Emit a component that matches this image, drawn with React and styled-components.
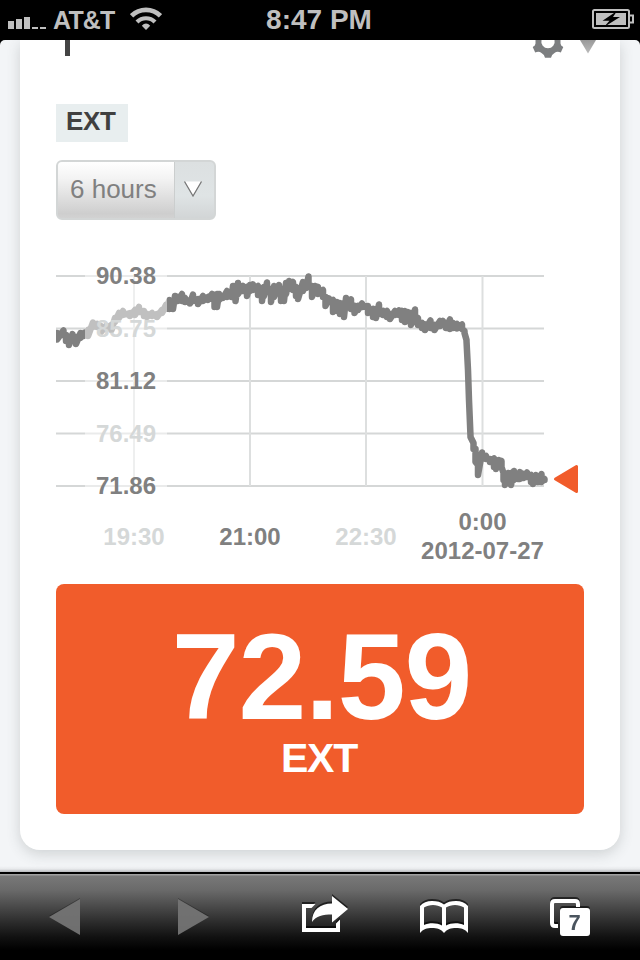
import React from "react";
import styled, { createGlobalStyle, css } from "styled-components";

const GlobalStyle = createGlobalStyle`
  * {
    box-sizing: border-box;
  }
  body {
    margin: 0;
    background: #000;
    font-family: "Liberation Sans", Arial, sans-serif;
  }
  svg {
    display: block;
  }
`;

const boldWhite = css`
  color: #fff;
  font-weight: bold;
`;

const Screen = styled.div`
  display: flex;
  flex-direction: column;
  width: 640px;
  height: 960px;
  overflow: hidden;
  background: #000;
`;

/* ------------------------------- status bar ------------------------------- */

const StatusBar = styled.header`
  display: grid;
  grid-template-columns: 1fr auto 1fr;
  align-items: center;
  flex: none;
  height: 40px;
  padding: 0 6px 0 8px;
  color: #bfbfbf;
  font-weight: bold;
`;

const Carrier = styled.div`
  display: flex;
  align-items: center;
  font-size: 25px;
  letter-spacing: -0.8px;
  line-height: 40px;
  svg:first-child {
    margin: 6px 7px 0 0;
  }
  svg:last-child {
    margin: 0 0 2px 15px;
  }
`;

const Clock = styled.time`
  margin-right: 4px;
  font-size: 28px;
  line-height: 38px;
`;

const BatterySlot = styled.div`
  display: flex;
  justify-content: flex-end;
  margin-bottom: 2px;
`;

/* ---------------------------------- page ---------------------------------- */

const Page = styled.main`
  display: flex;
  flex: 1;
  flex-direction: column;
  padding: 0 20px 22px;
  overflow: hidden;
  border-radius: 5px 5px 0 0;
  background: linear-gradient(
      to top,
      rgba(90, 90, 95, 0.4),
      rgba(150, 150, 155, 0.12) 3px,
      transparent 6px
    ),
    #f3f5f7;
`;

const Card = styled.section`
  display: flex;
  flex: 1;
  flex-direction: column;
  align-items: flex-start;
  padding: 0 36px 36px;
  border-radius: 0 0 20px 20px;
  background: #fff;
  box-shadow: 0 4px 14px rgba(60, 70, 70, 0.2);
`;

const CardHeader = styled.div`
  display: flex;
  justify-content: space-between;
  flex: none;
  width: 528px;
  height: 64px;
`;

const TitleStem = styled.span`
  width: 5px;
  height: 16px;
  margin-left: 9px;
  background: #444;
`;

const Tag = styled.h2`
  flex: none;
  height: 38px;
  margin: 0 0 18px;
  padding: 0 10px;
  width: 72px;
  background: #e8eeef;
  color: #404040;
  font-size: 26px;
  letter-spacing: -0.4px;
  line-height: 35px;
`;

const Select = styled.button`
  display: flex;
  flex: none;
  width: 160px;
  height: 60px;
  padding: 0;
  overflow: hidden;
  border: 2px solid #d3d6d6;
  border-radius: 6px;
  background: linear-gradient(#dce0e1, #dfe4e5 60%, #d2d5d6);
  font-family: inherit;
`;

const SelectValue = styled.span`
  width: 117px;
  height: 56px;
  padding-left: 12px;
  border-right: 1px solid #cbcece;
  background: linear-gradient(#fff, #f3f3f3 30%, #cecece 92%, #d2d2d2);
  color: #808080;
  font-size: 26px;
  line-height: 54px;
  text-align: left;
`;

const SelectArrow = styled.span`
  display: flex;
  flex: 1;
  padding: 18px 0 0 8px;
`;

const Reading = styled.div`
  display: flex;
  flex: none;
  flex-direction: column;
  align-items: center;
  width: 528px;
  height: 230px;
  padding-top: 33px;
  border-radius: 8px;
  background: #f15c2b;
`;

const ReadingValue = styled.strong`
  ${boldWhite}
  padding-left: 3px;
  font-size: 122px;
  letter-spacing: -1.2px;
  line-height: 120px;
`;

const ReadingLabel = styled.span`
  ${boldWhite}
  padding-right: 2px;
  font-size: 41px;
  letter-spacing: -1.2px;
  line-height: 42px;
`;

/* --------------------------------- toolbar -------------------------------- */

const Toolbar = styled.nav`
  display: grid;
  grid-template-columns: 130px 126px 126px 124px 134px;
  flex: none;
  height: 88px;
  border-top: 2px solid #000;
  background: linear-gradient(
    #a0a0a0 0,
    #a0a0a0 1px,
    #787878 2px,
    #6a6a6a 16px,
    #4b4b4b 32px,
    #2c2c2c 48px,
    #111 63px,
    #000 76px
  );
`;

const ToolButton = styled.button`
  padding: 0;
  border: 0;
  background: none;
  opacity: ${({ $dimmed }) => ($dimmed ? 0.95 : 1)};
  svg {
    width: 100%;
    height: 86px;
    filter: ${({ $dimmed }) =>
      $dimmed
        ? "drop-shadow(0 -1px 0 rgba(0, 0, 0, 0.3))"
        : "drop-shadow(0 -2px 0 rgba(0, 0, 0, 0.6))"};
  }
`;

/* ---------------------------------- icons --------------------------------- */

const SignalIcon = () => (
  <svg width="38" height="12" viewBox="8 17 38 12" fill="#bfbfbf">
    <path d="M8 21h6v8H8zM16 19h6v10h-6zM24 17h6v12h-6zM32 27h6v2h-6zM40 27h6v2h-6z" />
  </svg>
);

const WifiIcon = () => (
  <svg width="32" height="24" viewBox="130 8 32 24" fill="none" stroke="#bfbfbf">
    <path d="M131.5 16.8a20.5 20.5 0 0 1 29 0" strokeWidth="4.8" />
    <path d="M137 23a12.7 12.7 0 0 1 18 0" strokeWidth="4.2" />
    <path d="M146 31l-4.2-4.2q4.2-4.6 8.4 0z" fill="#bfbfbf" stroke="none" />
  </svg>
);

const BatteryIcon = () => (
  <svg width="42" height="20" viewBox="592 9 42 20">
    <rect x="593" y="10" width="36" height="18" rx="1.5" fill="none" stroke="#bfbfbf" strokeWidth="2" />
    <path d="M630 15.5h3v7h-3" fill="none" stroke="#bfbfbf" strokeWidth="2" />
    <path d="M596 13h30v12h-30z" fill="#bfbfbf" />
    <path d="M617 11L602.5 20.8H609.5L604 27L620 17H613z" fill="#000" />
  </svg>
);

const HeaderIcons = () => (
  <svg width="56" height="20" viewBox="528 40 56 20" overflow="visible">
    <defs>
      <linearGradient id="caret" x2="0" y2="1">
        <stop offset="0" stopColor="#999" />
        <stop offset="1" stopColor="#bbb" />
      </linearGradient>
    </defs>
    <path
      d="M535.5 40V43.500Q535.500 45.500 532.700 47L535.2 52.500Q539 51 541.500 53Q544.500 54.500 545 57.800H551Q551.500 54.500 554.500 53Q557 51 560.800 52.500L563.300 47Q560.500 45.500 560.500 43.500V40H554.500A6.700 6.700 0 1 1 541.500 40z"
      fill="#7c7e80"
    />
    <path d="M580 40h16l-8 13.500z" fill="url(#caret)" />
  </svg>
);

const BackIcon = () => (
  <svg viewBox="0 874 130 86">
    <path d="M49 917l31-18v36z" fill="#747474" />
  </svg>
);

const ForwardIcon = () => (
  <svg viewBox="130 874 126 86">
    <path d="M178 899l31 18-31 18z" fill="#747474" />
  </svg>
);

const ShareIcon = () => (
  <svg viewBox="256 874 126 86" fill="#fff">
    <path d="M302 904h13.500l-4 4H306v20h30v-4.500l4-4V932h-38z" />
    <path d="M312 922c0-12 8-18.500 20-18.500V896l16 13-16 13.500v-8c-9 0-16 1.500-20 7.500z" />
  </svg>
);

const BookmarksIcon = () => (
  <svg viewBox="382 874 124 86">
    <path
      fill="#fff"
      fillRule="evenodd"
      d="M420 933v-27c3-3.500 7-5 12-5s9 1 12 3.500c3-2.500 7-3.500 12-3.500s9 1.500 12 5v27c-3-4-7-5-12-5s-9 1-12 5c-3-4-7-5-12-5s-9 1-12 5zM424 907.500v17.500c5-2.500 13-2.500 18 .5v-18c-5-3.500-13-3.500-18 0zM446 907.500v18c5-3 13-3 18-.5v-17.500c-5-3.500-13-3.500-18 0z"
    />
  </svg>
);

const TabsIcon = ({ count }) => (
  <svg viewBox="506 874 134 86">
    <path
      d="M578 907v-3q0-3-3-3h-20q-3 0-3 3v19q0 3 3 3h3"
      fill="none"
      stroke="#fff"
      strokeWidth="4"
    />
    <rect x="560" y="908" width="30" height="28" rx="3" fill="#fff" />
    <text x="574.5" y="930" fill="#4a545e" fontSize="22" fontWeight="bold" textAnchor="middle">
      {count}
    </text>
  </svg>
);

/* ---------------------------------- chart --------------------------------- */

// [x, high, low]
const samples = [
  [57, 333, 339.5], [63.5, 330.5, 335], [66, 335, 341], [69, 337, 345],
  [72.5, 334, 338], [76, 337, 344], [80.5, 333, 338], [84, 333, 336],
  [88, 330, 336], [93, 322.5, 327], [97, 324, 327], [101, 326, 332],
  [106, 326, 329], [111.5, 325, 330], [115, 318, 322], [119, 313, 318],
  [123, 311, 315], [130, 313, 316], [135, 310, 315], [139, 307, 312],
  [144, 311, 316], [147, 314, 317], [152, 313, 316], [157, 314, 317],
  [162, 310, 313], [166, 305, 309], [169.5, 300, 309], [173, 300.5, 309],
  [175, 296, 302], [178, 297, 301], [182, 294, 301], [185, 298, 302],
  [190, 300, 303.5], [193, 294.5, 301], [198, 299, 304], [203, 296, 301],
  [208, 297, 300], [212, 294, 299], [214.5, 295, 307], [217, 294, 307],
  [219, 294, 300], [223, 296, 298], [227, 291, 297], [231.5, 292, 297],
  [233, 286, 294], [235.5, 287, 301], [238, 283, 294], [243, 286, 291],
  [247, 287, 296], [250, 285, 291], [253, 284.5, 290], [258, 286, 295],
  [262, 291, 301], [264, 287, 296], [267, 282.5, 292], [271, 289, 302],
  [274, 286, 297], [279, 285, 292], [281, 289, 301], [284, 289, 301],
  [286, 283, 294], [289, 281, 289], [293, 282, 290], [296, 287, 296],
  [298, 289, 299], [303, 282, 291], [306, 282, 288], [308.5, 276.5, 287],
  [312, 286, 297], [315, 286, 293], [318, 287, 294], [323, 290, 297],
  [325.5, 297, 306], [329, 298.5, 302], [333, 300, 312], [337, 302, 311],
  [340, 303, 314], [344, 303, 317], [346, 298, 305], [351, 299.5, 309],
  [354.5, 306, 313], [358, 306, 310], [362, 303.5, 307], [368, 306, 313],
  [373, 309, 317], [376, 309, 318], [379, 304.5, 314], [383, 311, 315],
  [387, 311, 317], [390, 314, 319], [395, 311, 315], [399, 310.5, 315],
  [402, 311, 320], [405, 311, 322], [408, 312, 321], [411, 313, 325],
  [415, 309.5, 322], [418, 318, 325], [422, 323, 328], [425, 324.5, 330],
  [430.5, 320.5, 328], [434.5, 325, 330], [440, 321, 326], [443, 321, 325],
  [446, 325, 328], [450, 319.5, 329], [453, 323, 328], [457, 324, 328.5],
  [462, 324.5, 329], [464.5, 331, 333], [466.5, 340, 341], [468, 370, 370],
  [469, 400, 400], [470.5, 436, 437], [473.5, 443, 449], [475.5, 449, 462],
  [478, 465, 475], [482, 452.5, 459], [486, 456, 459], [490, 459, 462],
  [494, 458.5, 467], [496, 460, 469], [499, 460, 466], [501.5, 461, 467],
  [503.5, 473, 480], [505, 474, 485], [508, 473, 481], [511, 473, 485],
  [514, 471, 480], [518, 474, 479], [520, 472, 479], [523.5, 474, 478],
  [527, 472.5, 477], [531, 475, 482], [533, 476, 484], [536, 475, 480],
  [538, 477, 482], [541.5, 474, 482], [544.5, 479, 480],
];

const trace = samples.flatMap(([x, high, low]) => [
  [x, high],
  [x, low],
]);

const yTicks = [
  { y: 276, text: "90.38" },
  { y: 328.5, text: "85.75", faint: true },
  { y: 381, text: "81.12" },
  { y: 433.5, text: "76.49", faint: true },
  { y: 486, text: "71.86" },
];

const xTicks = [
  { x: 134, lines: ["19:30"], faint: true },
  { x: 250, lines: ["21:00"] },
  { x: 366, lines: ["22:30"], faint: true },
  { x: 482.5, lines: ["0:00", "2012-07-27"] },
];

const ChartSvg = styled.svg`
  flex: none;
  overflow: hidden;
`;

const GridLine = styled.line`
  stroke: ${({ $light }) => ($light ? "#dddfdf" : "#d5d7d7")};
  stroke-width: 2px;
`;

const TickLabel = styled.text`
  fill: ${({ $faint }) => ($faint ? "#d5d8d8" : "#808080")};
  font-size: 24px;
  font-weight: bold;
  text-anchor: middle;
`;

const Chart = () => (
  <ChartSvg width="528" height="364" viewBox="56 220 528 364">
    {yTicks.map(({ y }) => (
      <GridLine key={y} x1="56" x2="544" y1={y} y2={y} />
    ))}
    {xTicks.map(({ x }) => (
      <GridLine key={x} $light x1={x} x2={x} y1="276" y2="486" />
    ))}
    <polyline
      points={trace.join(" ")}
      fill="none"
      stroke="#808080"
      strokeWidth="6.5"
      strokeLinecap="round"
      strokeLinejoin="round"
    />
    {/* fades the plot behind the value labels */}
    <rect x="85" y="262" width="82" height="238" fill="#fff" opacity="0.5" />
    {yTicks.map(({ y, text, faint }) => (
      <TickLabel key={text} $faint={faint} x="126" y={y + 8}>
        {text}
      </TickLabel>
    ))}
    {xTicks.map(({ x, lines, faint }) =>
      lines.map((line, i) => (
        <TickLabel
          key={line}
          $faint={faint}
          x={x}
          y={lines.length > 1 ? 530 + i * 29 : 545}
        >
          {line}
        </TickLabel>
      ))
    )}
    <path
      d="M555.5 479l21-12.5v25z"
      fill="#f15c2b"
      stroke="#f15c2b"
      strokeWidth="3"
      strokeLinejoin="round"
    />
  </ChartSvg>
);

/* ----------------------------------- app ---------------------------------- */

export default function App() {
  return (
    <Screen>
      <GlobalStyle />
      <StatusBar>
        <Carrier>
          <SignalIcon />
          AT&amp;T
          <WifiIcon />
        </Carrier>
        <Clock>8:47 PM</Clock>
        <BatterySlot>
          <BatteryIcon />
        </BatterySlot>
      </StatusBar>

      <Page>
        <Card>
          <CardHeader>
            <TitleStem />
            <HeaderIcons />
          </CardHeader>
          <Tag>EXT</Tag>
          <Select>
            <SelectValue>6 hours</SelectValue>
            <SelectArrow>
              <svg width="20" height="18" viewBox="0 0 20 18">
                <path d="M2 1.5l8 14L18 1.5z" fill="#fff" />
                <path d="M1.5 1.5l8.5 14.5 8.5-14.5" fill="none" stroke="#777" strokeWidth="1.3" />
              </svg>
            </SelectArrow>
          </Select>
          <Chart />
          <Reading>
            <ReadingValue>72.59</ReadingValue>
            <ReadingLabel>EXT</ReadingLabel>
          </Reading>
        </Card>
      </Page>

      <Toolbar>
        <ToolButton $dimmed aria-label="Back">
          <BackIcon />
        </ToolButton>
        <ToolButton $dimmed aria-label="Forward">
          <ForwardIcon />
        </ToolButton>
        <ToolButton aria-label="Share">
          <ShareIcon />
        </ToolButton>
        <ToolButton aria-label="Bookmarks">
          <BookmarksIcon />
        </ToolButton>
        <ToolButton aria-label="Tabs">
          <TabsIcon count={7} />
        </ToolButton>
      </Toolbar>
    </Screen>
  );
}
